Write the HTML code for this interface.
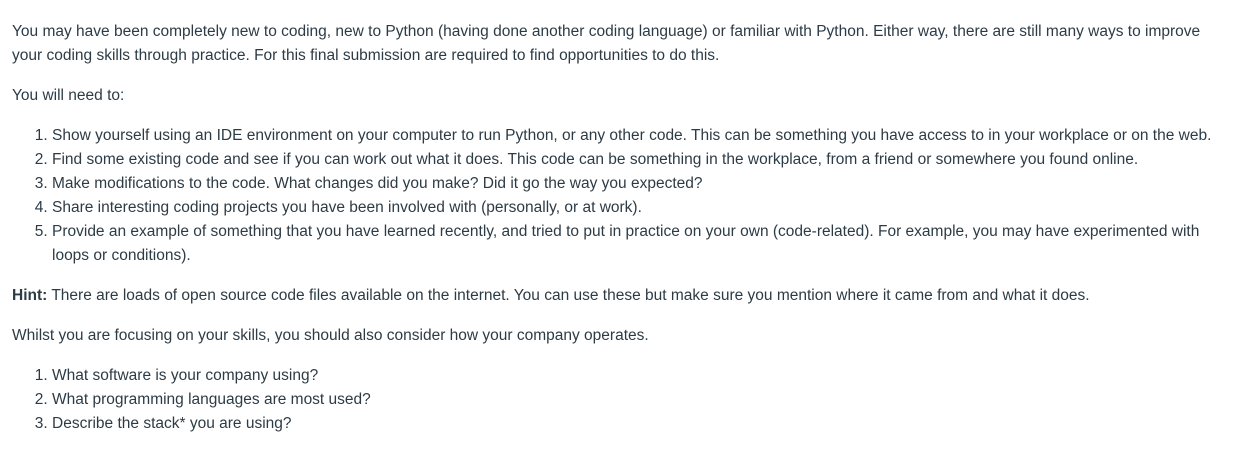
<!DOCTYPE html>
<html><head><meta charset="utf-8"><style>
body{margin:0;background:#fff;color:#2d3b45;font-family:"Liberation Sans",sans-serif;font-size:15.5px;line-height:24px;}
.w{padding:20px 12px 0 12px;white-space:nowrap;}
p{margin:0 0 16px 0;}
ol{margin:0 0 16px 0;padding-left:40px;}
li{padding-left:0;}
</style></head><body><div class="w">
<p>You may have been completely new to coding, new to Python (having done another coding language) or familiar with Python. Either way, there are still many ways to improve<br>your coding skills through practice. For this final submission are required to find opportunities to do this.</p>
<p>You will need to:</p>
<ol>
<li>Show yourself using an IDE environment on your computer to run Python, or any other code. This can be something you have access to in your workplace or on the web.</li>
<li>Find some existing code and see if you can work out what it does. This code can be something in the workplace, from a friend or somewhere you found online.</li>
<li>Make modifications to the code. What changes did you make? Did it go the way you expected?</li>
<li>Share interesting coding projects you have been involved with (personally, or at work).</li>
<li>Provide an example of something that you have learned recently, and tried to put in practice on your own (code-related). For example, you may have experimented with<br>loops or conditions).</li>
</ol>
<p><b>Hint:</b> There are loads of open source code files available on the internet. You can use these but make sure you mention where it came from and what it does.</p>
<p>Whilst you are focusing on your skills, you should also consider how your company operates.</p>
<ol>
<li>What software is your company using?</li>
<li>What programming languages are most used?</li>
<li>Describe the stack* you are using?</li>
</ol>
</div></body></html>
